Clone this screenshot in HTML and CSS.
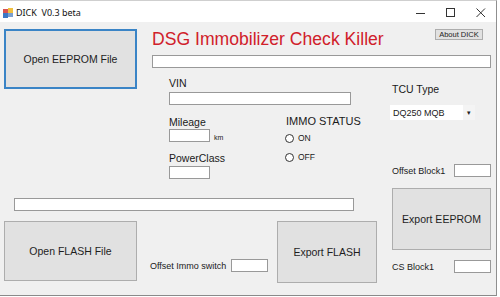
FILE: index.html
```html
<!DOCTYPE html>
<html>
<head>
<meta charset="utf-8">
<title>DICK V0.3 beta</title>
<link rel="stylesheet" href="styles.css">
</head>
<body>
<div class="window">
  <div class="titlebar">
    <svg class="app-icon" viewBox="0 0 10 10">
      <rect x="0" y="1" width="5" height="4" fill="#d9534f"/>
      <rect x="5" y="0" width="5" height="5" fill="#f0c040"/>
      <rect x="0" y="5" width="5" height="5" fill="#3b78c4"/>
      <rect x="5" y="5" width="5" height="4" fill="#7a9fd0"/>
    </svg>
    <span class="title">DICK&nbsp; V0.3 beta</span>
    <div class="controls">
      <span class="ctl"><svg width="10" height="10" viewBox="0 0 10 10"><line x1="0" y1="5.5" x2="9" y2="5.5" stroke="#333" stroke-width="1"/></svg></span>
      <span class="ctl"><svg width="10" height="10" viewBox="0 0 10 10"><rect x="0.5" y="0.5" width="8" height="8" fill="none" stroke="#333" stroke-width="1"/></svg></span>
      <span class="ctl"><svg width="10" height="10" viewBox="0 0 10 10"><path d="M0.5 0.5 L9 9 M9 0.5 L0.5 9" stroke="#333" stroke-width="1"/></svg></span>
    </div>
  </div>
  <div class="client">
    <button class="btn btn-big btn-eeprom">Open EEPROM File</button>
    <div class="header">
      <h1 class="app-title">DSG Immobilizer Check Killer</h1>
      <button class="btn btn-about">About DICK</button>
    </div>
    <div class="textbox status-top"></div>
    <div class="fields">
      <div class="lbl">VIN</div>
      <div class="textbox vin"></div>
      <div class="fields-row">
        <div class="fields-col">
          <div class="lbl lbl-mileage">Mileage</div>
          <div class="with-unit"><div class="textbox short"></div><span class="unit">km</span></div>
          <div class="lbl lbl-power">PowerClass</div>
          <div class="textbox short power-box"></div>
        </div>
        <div class="immo">
          <div class="lbl immo-title">IMMO STATUS</div>
          <div class="radio radio-on"><span class="dot"></span>ON</div>
          <div class="radio radio-off"><span class="dot"></span>OFF</div>
        </div>
      </div>
    </div>
    <div class="side">
      <div class="lbl">TCU Type</div>
      <div class="combo"><span class="combo-text">DQ250 MQB</span><span class="combo-arrow">&#9662;</span></div>
      <div class="small-row offset-block"><span class="small-lbl">Offset Block1</span><div class="textbox tiny"></div></div>
      <button class="btn btn-export-eeprom">Export EEPROM</button>
      <div class="small-row cs-block"><span class="small-lbl">CS Block1</span><div class="textbox tiny"></div></div>
    </div>
    <div class="textbox status-bottom"></div>
    <div class="bottom-row">
      <button class="btn btn-big btn-flash">Open FLASH File</button>
      <div class="offset-immo"><span class="small-lbl immo-lbl">Offset Immo switch</span><div class="textbox tiny"></div></div>
      <button class="btn btn-export-flash">Export FLASH</button>
    </div>
  </div>
</div>
</body>
</html>
```
FILE: styles.css
```css
* { box-sizing: border-box; }
html, body { margin: 0; padding: 0; }
body {
  width: 500px;
  height: 297px;
  overflow: hidden;
  background: #ffffff;
  font-family: "Liberation Sans", Arial, sans-serif;
  color: #1a1a1a;
}
.window {
  width: 497px;
  height: 296px;
  border-top: 1px solid #cfcfcf;
  border-right: 1px solid #8f8f8f;
  border-bottom: 1px solid #8a8a8a;
  background: #f0f0f0;
  display: flex;
  flex-direction: column;
}
.titlebar {
  flex: none;
  height: 21px;
  background: #ffffff;
  display: flex;
  align-items: center;
}
.app-icon { width: 10px; height: 10px; margin-left: 3px; margin-top: 2px; }
.title {
  font-family: "Noto Sans", "Open Sans", sans-serif;
  font-size: 9px;
  margin-left: 3px;
  margin-top: 2px;
  color: #111;
}
.controls { margin-left: auto; display: flex; height: 100%; }
.ctl { width: 30px; height: 21px; display: flex; align-items: center; justify-content: center; padding-top: 2px; }

.client {
  flex: 1;
  display: grid;
  grid-template-columns: 152px 240px 104px;
  grid-template-rows: 26px 13px 130px 13px 1fr;
  padding-top: 7px;
}

.btn {
  font-family: "Liberation Sans", Arial, sans-serif;
  font-size: 10.5px;
  color: #1e1e1e;
  background: #e1e1e1;
  border: 1px solid #adadad;
  margin: 0;
  padding: 0;
}
.btn-big { width: 133px; height: 60px; }
.btn-eeprom {
  grid-column: 1;
  grid-row: 1 / 4;
  align-self: start;
  margin-left: 4px;
  border: 2px solid #3a84c6;
}

.header {
  grid-column: 2 / 4;
  grid-row: 1;
  display: flex;
  align-items: flex-start;
}
.app-title {
  margin: 0;
  font-family: "Liberation Sans", Arial, sans-serif;
  font-weight: normal;
  font-size: 17.6px;
  line-height: 20px;
  color: #d0202a;
}
.btn-about {
  margin-left: auto;
  margin-right: 13px;
  width: 48px;
  height: 11px;
  font-size: 7.5px;
  line-height: 9px;
  color: #222;
}

.textbox {
  background: #ffffff;
  border: 1px solid #999999;
  height: 13px;
}
.status-top { grid-column: 2 / 4; grid-row: 2; margin-right: 5px; }
.status-bottom { grid-column: 1 / 3; grid-row: 4; margin-left: 14px; width: 340px; }

.lbl { font-size: 10.5px; line-height: 13px; height: 13px; white-space: nowrap; }

.fields {
  grid-column: 2;
  grid-row: 3;
  padding-left: 17px;
  padding-top: 9px;
}
.vin { width: 182px; margin-top: 2px; }
.fields-row { display: flex; }
.fields-col { width: 117px; }
.lbl-mileage { margin-top: 11px; }
.with-unit { display: flex; align-items: center; }
.short { width: 41px; }
.unit { font-size: 7px; margin-left: 4px; margin-top: 3px; }
.lbl-power { margin-top: 10px; }
.power-box { margin-top: 1px; }

.immo-title { font-size: 11px; margin-top: 10px; }
.radio {
  display: flex;
  align-items: center;
  height: 14px;
  font-size: 8.5px;
  margin-left: -1px;
}
.radio-on { margin-top: 3px; }
.radio-off { margin-top: 5px; }
.dot {
  width: 9px;
  height: 9px;
  border: 1px solid #333;
  border-radius: 50%;
  background: #fff;
  margin-right: 4px;
}

.side {
  grid-column: 3;
  grid-row: 3 / 6;
  padding-top: 15px;
  display: flex;
  flex-direction: column;
  align-items: flex-start;
}
.combo {
  margin-top: 9px;
  margin-left: -2px;
  width: 85px;
  height: 15px;
  background: #ffffff;
  display: flex;
  align-items: center;
}
.combo-text { font-size: 9px; padding-left: 3px; flex: 1; }
.combo-arrow {
  width: 12px;
  height: 100%;
  background: #f4f4f4;
  font-size: 7px;
  display: flex;
  align-items: center;
  justify-content: center;
  color: #222;
}
.small-row { display: flex; align-items: center; width: 100%; height: 13px; }
.small-lbl { font-size: 9px; white-space: nowrap; }
.tiny { width: 37px; margin-left: auto; margin-right: 5px; }
.offset-block { margin-top: 44px; }
.btn-export-eeprom { margin-top: 11px; width: 99px; height: 62px; }
.cs-block { margin-top: 10px; }

.bottom-row {
  grid-column: 1 / 3;
  grid-row: 5;
  display: flex;
  align-items: flex-start;
  padding-top: 10px;
}
.btn-flash { margin-left: 4px; }
.offset-immo {
  display: flex;
  align-items: center;
  margin-left: 13px;
  margin-top: 38px;
  height: 13px;
}
.immo-lbl { width: 81px; }
.offset-immo .tiny { width: 37px; margin: 0; }
.btn-export-flash { margin-left: 9px; width: 100px; height: 62px; }
```
